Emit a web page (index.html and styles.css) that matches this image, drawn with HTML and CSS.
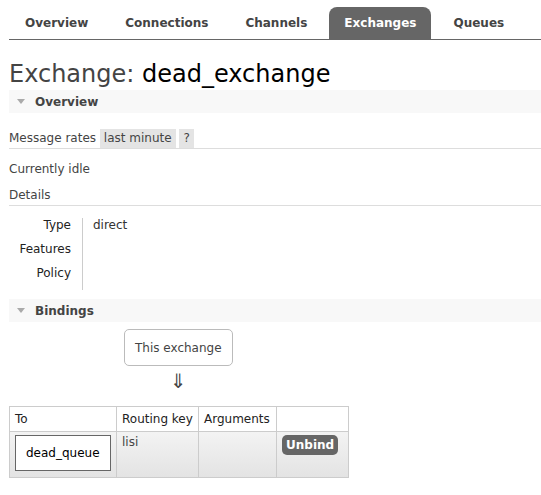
FILE: index.html
```html
<!DOCTYPE html>
<html>
<head>
<meta charset="utf-8">
<title>Exchange: dead_exchange</title>
<link rel="stylesheet" href="styles.css">
</head>
<body>
<div class="page">
  <ul class="tabs">
    <li><a class="tab">Overview</a></li>
    <li><a class="tab">Connections</a></li>
    <li><a class="tab">Channels</a></li>
    <li><a class="tab active">Exchanges</a></li>
    <li><a class="tab">Queues</a></li>
  </ul>

  <h1 class="title"><span class="title-label">Exchange:</span> <span class="title-name">dead_exchange</span></h1>

  <div class="section">
    <h2 class="section-title"><span class="tri"></span>Overview</h2>
    <div class="rates">Message rates <span class="pill">last minute</span> <span class="pill">?</span></div>
    <p class="idle">Currently idle</p>
    <h3 class="subhead">Details</h3>
    <table class="facts">
      <tr><th>Type</th><td>direct</td></tr>
      <tr><th>Features</th><td></td></tr>
      <tr class="last"><th>Policy</th><td></td></tr>
    </table>
  </div>

  <div class="section">
    <h2 class="section-title"><span class="tri"></span>Bindings</h2>
    <div class="flow">
      <div class="flow-col">
        <div class="this-box">This exchange</div>
        <div class="arrow">⇓</div>
      </div>
    </div>
    <table class="bindings">
      <colgroup>
        <col class="c-to"><col class="c-key"><col class="c-args"><col class="c-act">
      </colgroup>
      <thead>
        <tr><th>To</th><th>Routing key</th><th>Arguments</th><th></th></tr>
      </thead>
      <tbody>
        <tr>
          <td><span class="queue-box">dead_queue</span></td>
          <td>lisi</td>
          <td></td>
          <td><span class="btn">Unbind</span></td>
        </tr>
      </tbody>
    </table>
  </div>
</div>
</body>
</html>
```

FILE: styles.css
```css
html, body {
  margin: 0;
  padding: 0;
  background: #fff;
}
body {
  font-family: "DejaVu Sans", Verdana, sans-serif;
  font-size: 12px;
  line-height: 14px;
  color: #444;
}
.page {
  padding-left: 9px;
}

/* tabs */
.tabs {
  display: flex;
  gap: 7px;
  list-style: none;
  margin: 0;
  padding: 7px 0 0 1px;
  border-bottom: 1px solid #666;
}
.tab {
  display: block;
  height: 32px;
  line-height: 32px;
  padding: 0 15px;
  font-weight: bold;
  color: #444;
  border-radius: 8px 8px 0 0;
}
.tab.active {
  background: #666;
  color: #fff;
}

/* title */
.title {
  margin: 20px 0 2px;
  font-size: 24px;
  line-height: 28px;
  font-weight: normal;
  color: #444;
}
.title-name {
  color: #000;
}

/* sections */
.section-title {
  margin: 0;
  font-size: 12px;
  font-weight: bold;
  line-height: 20px;
  padding: 2px 0 1px;
  background: #f8f8f8;
  color: #444;
}
.tri {
  display: inline-block;
  width: 0;
  height: 0;
  border-left: 4px solid transparent;
  border-right: 4px solid transparent;
  border-top: 5px solid #aaa;
  margin: 0 10px 0 8px;
  vertical-align: 2px;
}
.rates {
  margin-top: 16px;
  line-height: 19px;
  border-bottom: 1px solid #ddd;
}
.pill {
  display: inline-block;
  padding: 0 4px;
  background: #e4e4e4;
  line-height: 19px;
}
.idle {
  margin: 13px 0 0;
}
.subhead {
  margin: 12px 0 0;
  font-size: 12px;
  font-weight: normal;
  padding-bottom: 3px;
  border-bottom: 1px solid #ddd;
}
.facts {
  border-collapse: collapse;
  margin-top: 12px;
}
.facts th {
  width: 62px;
  text-align: right;
  font-weight: normal;
  color: #222;
  padding: 0 11px 10px 0;
  border-right: 1px solid #ccc;
  vertical-align: top;
}
.facts td {
  padding: 0 0 10px 10px;
  vertical-align: top;
  color: #333;
}
.facts .last th {
  padding-top: 0;
}
.section + .section {
  margin-top: 9px;
}

/* bindings flow */
.flow {
  padding: 7px 0 0 115px;
}
.flow-col {
  display: inline-flex;
  flex-direction: column;
  align-items: center;
}
.this-box {
  border: 1px solid #bbb;
  border-radius: 5px;
  padding: 11px 10px 10px;
  color: #444;
}
.arrow {
  font-size: 20px;
  line-height: 22px;
  margin-top: 4px;
  color: #444;
}

/* bindings table */
.bindings {
  border-collapse: collapse;
  table-layout: fixed;
  width: 339px;
  margin-top: 14px;
  border: 1px solid #ccc;
}
.c-to { width: 107px; }
.c-key { width: 82px; }
.c-args { width: 78px; }
.c-act { width: 72px; }
.bindings th {
  font-weight: normal;
  text-align: left;
  padding: 5px 5px 5px;
  border: 1px solid #ccc;
  color: #222;
  white-space: nowrap;
  background: #fff;
}
.bindings td {
  border: 1px solid #ccc;
  padding: 3px 5px 6px;
  vertical-align: top;
  color: #444;
}
.bindings tbody tr {
  background: linear-gradient(to bottom, #f3f3f3, #e3e3e3);
}
.queue-box {
  display: inline-block;
  border: 1px solid #666;
  background: #fff;
  color: #000;
  padding: 10px;
  text-align: center;
}
.btn {
  display: inline-block;
  background: #666;
  color: #fff;
  font-weight: bold;
  padding: 0 4px;
  line-height: 20px;
  border-radius: 5px;
}
```
